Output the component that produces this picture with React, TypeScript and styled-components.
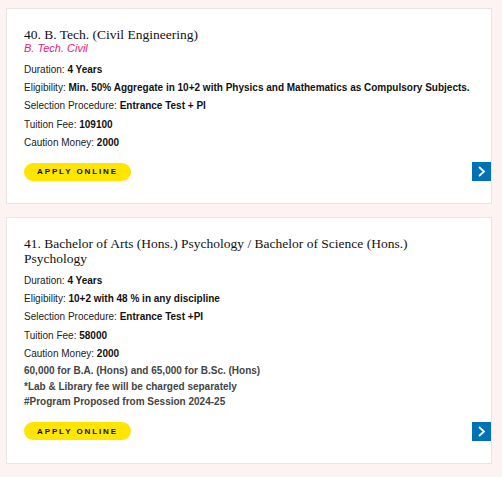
import React from 'react';
import styled, { createGlobalStyle } from 'styled-components';

const GlobalStyle = createGlobalStyle`
  body {
    margin: 0;
    background: #fdf3f3;
    font-family: "Liberation Sans", Arial, sans-serif;
  }
`;

const Page = styled.div`
  display: flex;
  flex-direction: column;
  gap: 13px;
  padding: 8px 10px 14px 6px;
`;

const Card = styled.div`
  background: #ffffff;
  border: 1px solid #e6e6e6;
  padding: 18px 0 22px 17px;
`;

const Content = styled.div`
  padding-right: 30px;
`;

const Title = styled.h3`
  margin: 0;
  font-family: "Liberation Serif", "Times New Roman", serif;
  font-weight: normal;
  font-size: 13.5px;
  line-height: 15px;
  color: #111;
`;

const Subtitle = styled.div`
  font-size: 11px;
  line-height: 13px;
  font-style: italic;
  color: #e4197c;
`;

const Details = styled.div`
  margin-top: 6px;
`;

const Row = styled.div`
  font-size: 10px;
  line-height: 18.2px;
  color: #222;
  white-space: nowrap;

  b {
    color: #111;
  }
`;

const Notes = styled.div`
  font-size: 10px;
  line-height: 15.5px;
  font-weight: bold;
  color: #444;
  padding-bottom: 2px;
`;

const Footer = styled.div`
  display: flex;
  justify-content: space-between;
  align-items: center;
  margin-top: 10px;
`;

const ApplyButton = styled.a`
  display: inline-flex;
  align-items: center;
  justify-content: center;
  width: 107px;
  height: 18px;
  border-radius: 9px;
  background: #ffe500;
  color: #111;
  font-size: 8px;
  font-weight: bold;
  letter-spacing: 1.9px;
  text-decoration: none;
`;

const Arrow = styled.span`
  display: flex;
  align-items: center;
  justify-content: center;
  width: 19px;
  height: 19px;
  background: #0071b5;
`;

interface Program {
  title: string;
  subtitle?: string;
  rows: [string, string][];
  notes?: string[];
}

const programs: Program[] = [
  {
    title: '40. B. Tech. (Civil Engineering)',
    subtitle: 'B. Tech. Civil',
    rows: [
      ['Duration', '4 Years'],
      ['Eligibility', 'Min. 50% Aggregate in 10+2 with Physics and Mathematics as Compulsory Subjects.'],
      ['Selection Procedure', 'Entrance Test + PI'],
      ['Tuition Fee', '109100'],
      ['Caution Money', '2000'],
    ],
  },
  {
    title: '41. Bachelor of Arts (Hons.) Psychology / Bachelor of Science (Hons.) Psychology',
    rows: [
      ['Duration', '4 Years'],
      ['Eligibility', '10+2 with 48 % in any discipline'],
      ['Selection Procedure', 'Entrance Test +PI'],
      ['Tuition Fee', '58000'],
      ['Caution Money', '2000'],
    ],
    notes: [
      '60,000 for B.A. (Hons) and 65,000 for B.Sc. (Hons)',
      '*Lab & Library fee will be charged separately',
      '#Program Proposed from Session 2024-25',
    ],
  },
];

const Chevron = () => (
  <svg width="9" height="11" viewBox="0 0 9 11">
    <path d="M2 1 L7 5.5 L2 10" fill="none" stroke="#fff" strokeWidth="1.8" />
  </svg>
);

const App: React.FC = () => {
  return (
    <Page>
      <GlobalStyle />
      {programs.map((p) => (
        <Card key={p.title}>
          <Content>
            <Title>{p.title}</Title>
            {p.subtitle && <Subtitle>{p.subtitle}</Subtitle>}
            <Details>
              {p.rows.map(([label, value]) => (
                <Row key={label}>
                  {label}: <b>{value}</b>
                </Row>
              ))}
            </Details>
            {p.notes && (
              <Notes>
                {p.notes.map((n) => (
                  <div key={n}>{n}</div>
                ))}
              </Notes>
            )}
          </Content>
          <Footer>
            <ApplyButton href="#">APPLY ONLINE</ApplyButton>
            <Arrow>
              <Chevron />
            </Arrow>
          </Footer>
        </Card>
      ))}
    </Page>
  );
};

export default App;
